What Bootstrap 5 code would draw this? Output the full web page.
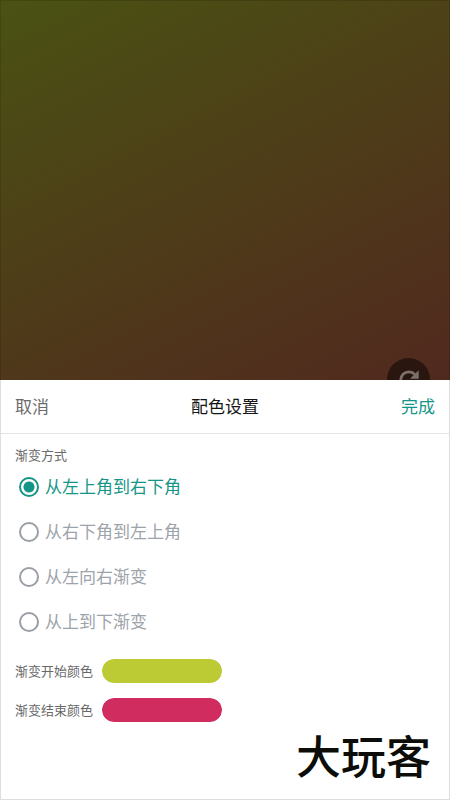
<!DOCTYPE html>
<html lang="zh-CN">
<head>
<meta charset="utf-8">
<meta name="viewport" content="width=device-width, initial-scale=1">
<title>配色设置</title>
<link href="https://cdn.jsdelivr.net/npm/bootstrap@5.3.0/dist/css/bootstrap.min.css" rel="stylesheet">
<style>
  body { font-family: "Noto Sans CJK SC", "Noto Sans", sans-serif; --teal: #159588; }
  .preview { background: linear-gradient(154deg, #4a5213, #4e3c19 52%, #51291f) border-box; border: 1px solid rgba(0, 0, 0, .12); border-bottom: 0; }
  .refresh-btn { right: 19px; bottom: -21px; width: 43px; height: 43px; background: #28160f; color: #7c706b; }
  .sheet { border: 1px solid #dedede; border-top: 0; }
  .sheet-head { height: 54px; padding-bottom: 2px; border-bottom: 1px solid #e4e4e4; }
  .sheet-head .btn { font-size: 17px; line-height: 24px; }
  .cancel-btn { color: #6b6b6b; }
  .done-btn { color: var(--teal); }
  .sheet-title { color: #151515; font-size: 17px; line-height: 24px; }
  .side-pad { padding-left: 14px; padding-right: 14px; }
  .field-name { font-size: 13px; line-height: 18px; color: #686868; }
  .mode-group { padding-top: 12px; margin-bottom: 7px; }
  .mode-row { height: 45px; gap: 6px; padding-left: 4px; }
  .mode-row label { font-size: 17px; line-height: 24px; padding-bottom: 2px; color: #9da3aa; }
  .mode-row .form-check-input { width: 20px; height: 20px; border: 2px solid #9a9fa6; background-color: #fff; }
  .mode-row .form-check-input:checked { border-color: var(--teal); background-size: 100% 100%; background-image: radial-gradient(circle, var(--teal) 5px, transparent 6px); }
  .mode-row .form-check-input:checked + label { color: var(--teal); }
  .color-row { height: 39px; gap: 9px; }
  .color-pill { width: 120px; height: 24px; appearance: none; cursor: pointer; }
  .color-pill::-webkit-color-swatch-wrapper { padding: 0; }
  .color-pill::-webkit-color-swatch { border: 0; border-radius: 12px; }
  .brand-name { font-size: 45px; line-height: 52px; font-weight: 500; color: #0c0c08; padding: 0 18px 18px; }
</style>
</head>
<body>
<div class="min-vh-100 d-flex flex-column">
  <section class="preview flex-grow-1 position-relative overflow-hidden" aria-label="预览">
    <button type="button" class="refresh-btn btn border-0 rounded-circle p-0 position-absolute d-flex align-items-center justify-content-center" aria-label="刷新">
      <svg width="28" height="28" viewBox="0 0 24 24" fill="none" aria-hidden="true"><path d="M17.2 16.5A7 7 0 1 1 17 7.2" stroke="#7c706b" stroke-width="2.4"/><path d="M20.3 3.6V11h-7.4z" fill="#7c706b"/></svg>
    </button>
  </section>
  <main class="sheet bg-white">
    <header class="sheet-head side-pad d-flex align-items-center justify-content-between">
      <button type="button" class="btn cancel-btn border-0 p-0">取消</button>
      <h1 class="sheet-title fw-normal m-0">配色设置</h1>
      <button type="button" class="btn done-btn border-0 p-0">完成</button>
    </header>
    <form class="side-pad">
      <fieldset class="mode-group">
        <legend class="field-name m-0">渐变方式</legend>
        <div class="mode-row d-flex align-items-center">
          <input class="form-check-input m-0" type="radio" name="mode" id="mode1" checked><label for="mode1">从左上角到右下角</label>
        </div>
        <div class="mode-row d-flex align-items-center">
          <input class="form-check-input m-0" type="radio" name="mode" id="mode2"><label for="mode2">从右下角到左上角</label>
        </div>
        <div class="mode-row d-flex align-items-center">
          <input class="form-check-input m-0" type="radio" name="mode" id="mode3"><label for="mode3">从左向右渐变</label>
        </div>
        <div class="mode-row d-flex align-items-center">
          <input class="form-check-input m-0" type="radio" name="mode" id="mode4"><label for="mode4">从上到下渐变</label>
        </div>
      </fieldset>
      <div class="color-row d-flex align-items-center">
        <label class="field-name" for="startColor">渐变开始颜色</label>
        <input type="color" class="color-pill border-0 p-0 rounded-pill" id="startColor" value="#bccb34">
      </div>
      <div class="color-row d-flex align-items-center">
        <label class="field-name" for="endColor">渐变结束颜色</label>
        <input type="color" class="color-pill border-0 p-0 rounded-pill" id="endColor" value="#d02c60">
      </div>
    </form>
    <div class="brand-name text-end">大玩客</div>
  </main>
</div>
<script src="https://cdn.jsdelivr.net/npm/bootstrap@5.3.0/dist/js/bootstrap.bundle.min.js"></script>
</body>
</html>
